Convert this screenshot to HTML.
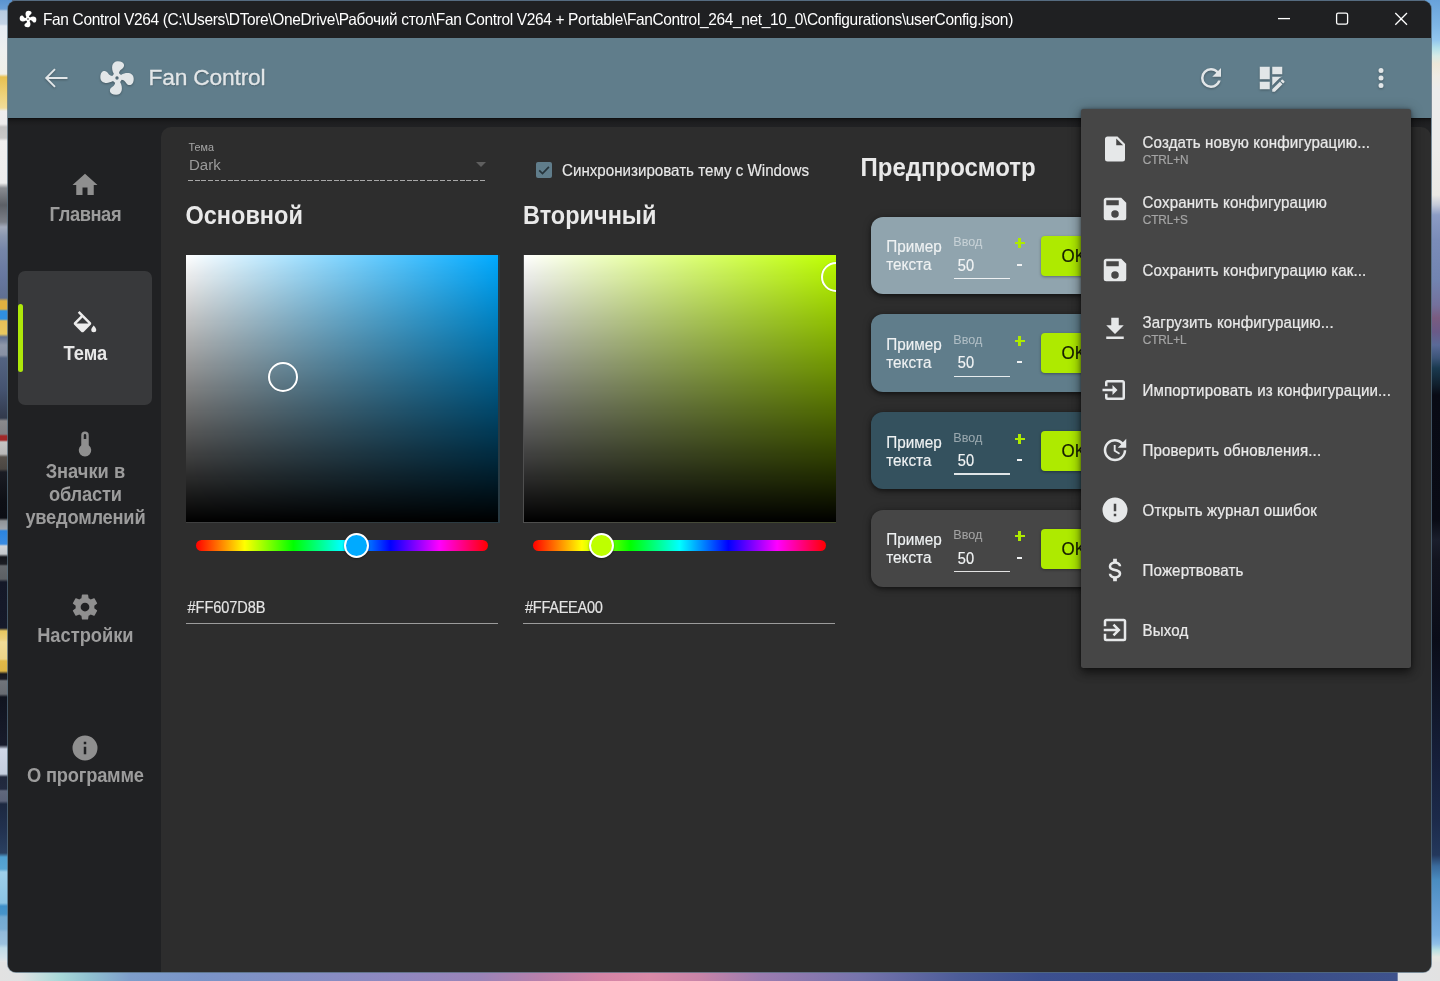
<!DOCTYPE html>
<html lang="ru">
<head>
<meta charset="utf-8">
<title>Fan Control V264</title>
<style>
*{box-sizing:border-box;margin:0;padding:0}
html,body{width:1440px;height:981px;overflow:hidden;background:#5a6a8a;font-family:"Liberation Sans",sans-serif;}
.abs{position:absolute}
#desk{position:absolute;left:0;top:0;width:1440px;height:981px;overflow:hidden;}
#deskL{position:absolute;left:0;top:0;width:12px;height:981px;
 background:linear-gradient(180deg,#5a94d0 0px,#6a9fd6 9px,#b8cce0 11px,#c4d4e6 24px,#e6ecf3 26px,#eef0f0 50px,#f0efe8 74px,#e8c050 77px,#efd27a 95px,#f2dc98 108px,#eeeeee 111px,#ececec 124px,#c2c2c2 127px,#c8c8c8 138px,#f0f0f0 141px,#ededed 183px,#8a8d92 188px,#5c6066 205px,#7c8088 222px,#a2aaba 227px,#8b98b0 236px,#7686a8 250px,#6878a0 275px,#5f6f92 298px,#e0b040 301px,#e0b040 309px,#3090e0 311px,#3090e0 319px,#e8c058 321px,#e8c860 334px,#607090 337px,#8e97a9 345px,#8891a4 355px,#546482 358px,#455370 390px,#323a4c 418px,#8a8a8c 421px,#808084 434px,#a02828 436px,#a02828 440px,#c4c4c4 442px,#b8b8b8 454px,#56504a 457px,#4a4642 469px,#1a1c24 472px,#0e1016 500px,#0c0e14 518px,#909498 521px,#9ea4ac 529px,#2a84e0 531px,#3a8ce2 544px,#d0d4d8 546px,#c4c8cc 554px,#14161c 557px,#1c1e24 564px,#64686c 566px,#5c6064 579px,#141828 582px,#161a2a 628px,#e8c860 631px,#ecd07a 639px,#f0dc98 642px,#ecd488 659px,#e0b848 661px,#dcb444 671px,#15171f 674px,#1c1e26 679px,#70747a 681px,#686c72 694px,#10141f 697px,#181c2c 745px,#d0d8e8 749px,#c4cede 774px,#20283c 777px,#222a40 789px,#60687c 791px,#5a6278 801px,#1c2840 804px,#223250 830px,#2a4060 853px,#50a0d0 857px,#58a6d4 869px,#9fd0ea 872px,#8cc4e4 903px,#4090c8 906px,#4694ca 914px,#72aad2 917px,#7aaed4 929px,#92badA 932px,#9cc2de 944px,#c0dce8 948px,#d4e2ea 958px,#e4e4e4 962px,#e4e4e4 981px);}
#deskB{position:absolute;left:0;top:962px;width:1440px;height:19px;
 background:linear-gradient(90deg,#e2e2e2 0px,#e0e2e3 20px,#c4dede 40px,#a8d8d8 60px,#90c0d0 90px,#7e9ecb 130px,#7a94c8 200px,#8090c4 270px,#9088c0 400px,#9a84b8 480px,#b880ac 540px,#d484a6 600px,#da8aa8 650px,#c884a8 700px,#9c7cb0 760px,#7674ac 860px,#4c5c98 960px,#3c5090 1040px,#384c88 1200px,#3e528c 1397px,#e2e4e6 1398.5px,#e2e2e2 1440px);}
#deskR{position:absolute;left:1425px;top:0;width:15px;height:981px;
 background:linear-gradient(180deg,#68a2da 0px,#7eb6e6 25px,#92c6ee 40px,#b2e0ea 48px,#d8ece6 56px,#eee8d8 64px,#efece4 76px,#ececec 90px,#ececea 150px,#eae9e4 195px,#c4cad8 205px,#8c9cc4 215px,#7a8cb8 240px,#7284b0 280px,#74719c 305px,#7a5c80 318px,#6a5a88 332px,#5a6a98 345px,#3c5478 358px,#1a3a50 368px,#10202e 384px,#080a14 395px,#090b15 520px,#1a1e2c 540px,#12141f 560px,#0a0c18 640px,#101628 700px,#161f3a 760px,#1c2a4a 820px,#24385c 855px,#3a6a9c 866px,#4a8cc0 880px,#68a0d6 915px,#78aee0 935px,#90c0e8 944px,#b8e0e2 950px,#e6e8e2 957px,#e2e2e2 964px,#e0e0e0 981px);}
#win{position:absolute;left:8px;top:1px;width:1423px;height:971px;border-radius:8px;overflow:hidden;background:#2d2d2d;box-shadow:0 0 0 1px rgba(84,108,124,.75);}
#w{position:absolute;left:-8px;top:-1px;width:1440px;height:981px;will-change:transform;}
#title{position:absolute;left:8px;top:0;width:1424px;height:38px;background:#1f2022;color:#fff;}
#title .t{transform:scaleY(1.05);transform-origin:0 15.37px;position:absolute;left:35px;top:9.7px;font-size:15.5px;line-height:20px;white-space:nowrap;letter-spacing:-0.36px}
svg{position:absolute;overflow:visible}
.ic{fill:#e2e6e8}
#appname{-webkit-text-stroke:.3px #e2e6e8;text-shadow:.5px 1px 1.5px rgba(0,0,0,.28);position:absolute;left:140.5px;top:25.4px;font-size:22.8px;line-height:28px;color:#e2e6e8;white-space:nowrap;letter-spacing:-0.2px}
#appbar svg{filter:drop-shadow(.4px 1px .9px rgba(0,0,0,.28))}
#appbar{position:absolute;left:8px;top:38px;width:1424px;height:80px;background:#607d8b;}
#side{position:absolute;left:8px;top:118px;width:154px;height:854px;background:#202123;}
#gap{position:absolute;left:160px;top:118px;width:1272px;height:24px;background:#202123;}
#content{position:absolute;left:160.8px;top:126.5px;width:1270px;height:846px;background:#2d2d2d;border-radius:10px 10px 0 0;}
#abshadow{position:absolute;left:8px;top:118px;width:1424px;height:8px;background:linear-gradient(180deg,rgba(0,0,0,.62) 0,rgba(0,0,0,.3) 1.5px,rgba(0,0,0,.12) 4px,rgba(0,0,0,0) 8px);}
.nav{transform:scaleY(1.06);transform-origin:0 17.69px;position:absolute;left:9.4px;width:152px;text-align:center;font-weight:bold;font-size:18.3px;line-height:22.7px;color:#9c9c9c;white-space:nowrap}
.nav.sel{color:#e8e8e8}
.ni{fill:#8f8f8f}
#selbox{position:absolute;left:18px;top:271px;width:134px;height:134px;border-radius:7px;background:#38393b}
#selbar{position:absolute;left:17.8px;top:304.3px;width:5.5px;height:68px;border-radius:2.7px;background:#aee80a}
.tx{position:absolute;white-space:nowrap}
.h{transform:scaleY(1.09);transform-origin:0 22.14px;position:absolute;white-space:nowrap;font-weight:bold;font-size:23.5px;line-height:28px;color:#e9e9e9}
.sv{position:absolute;top:255px;width:313px;height:267px;overflow:hidden}
.sv i{position:absolute;width:30px;height:30px;border:2.2px solid #fff;border-radius:50%;box-shadow:0 0 1px rgba(0,0,0,.35)}
.hue{position:absolute;top:539.5px;height:11px;border-radius:5.5px;background:linear-gradient(90deg,#f00 0%,#ff0 16.67%,#0f0 33.33%,#0ff 50%,#00f 66.67%,#f0f 83.33%,#f00 100%)}
.th{position:absolute;top:533px;width:25px;height:25px;border-radius:50%;border:2.6px solid #fff;box-shadow:0 1px 2px rgba(0,0,0,.4)}
.hex{-webkit-text-stroke:.15px #e4e4e4;transform:scaleY(1.07);transform-origin:0 14.06px;position:absolute;top:599.2px;font-size:14.6px;line-height:18px;color:#e4e4e4;white-space:nowrap}
.ul{position:absolute;top:622.6px;height:1.3px;width:312.2px;background:#9b9b9b}
.card{position:absolute;left:871px;width:300px;height:77.3px;border-radius:12px 0 0 12px;box-shadow:0 2px 4px rgba(0,0,0,.45),0 1px 8px rgba(0,0,0,.25)}
.card .p{transform:scaleY(1.02);transform-origin:0 50%;-webkit-text-stroke:.15px #eef1f2;position:absolute;left:15.2px;top:21.5px;font-size:15.3px;line-height:17.9px;color:#eef1f2}
.card .l{transform:scaleY(1.025);transform-origin:0 11.87px;position:absolute;left:82.3px;top:18.7px;font-size:12.6px;line-height:15px;color:rgba(255,255,255,.5)}
.card .v{transform:scaleY(1.07);transform-origin:0 14.06px;-webkit-text-stroke:.15px #f2f4f5;position:absolute;left:86.8px;top:40.2px;font-size:14.6px;line-height:18px;color:#f2f4f5}
.card .u{position:absolute;left:83px;top:61.4px;width:56.3px;height:1.3px;background:rgba(255,255,255,.85)}
.card .pl{position:absolute;left:143.6px;top:21.7px;width:10px;height:10px;}
.card .pl:before{content:"";position:absolute;left:0;top:3.9px;width:10px;height:2.2px;background:#aeea00}
.card .pl:after{content:"";position:absolute;left:3.9px;top:0;width:2.2px;height:10px;background:#aeea00}
.card .mi{position:absolute;left:146px;top:47px;width:5.2px;height:2px;background:#f0f2f3}
.card .ok{position:absolute;left:170px;top:19px;width:140px;height:40px;border-radius:4px;background:#aeea00;color:#161d00;font-size:17px;line-height:40px;padding-left:20.5px;-webkit-text-stroke:.2px #161d00;box-shadow:0 1px 3px rgba(0,0,0,.35)}
#menu{position:absolute;left:1080.5px;top:108.5px;width:330px;height:559.6px;background:#464646;border-radius:2.5px;box-shadow:0 5px 9px rgba(0,0,0,.42),0 2px 14px rgba(0,0,0,.3),0 0 3px rgba(0,0,0,.35)}
.mt{transform:scaleY(1.04);transform-origin:0 14.23px;-webkit-text-stroke:.22px #e9e9e9;position:absolute;left:1142.6px;font-size:15.1px;line-height:18px;color:#e9e9e9;white-space:nowrap;letter-spacing:.12px}
.ms{transform:scaleY(1.10);transform-origin:0 11.09px;-webkit-text-stroke:.2px #a4a4a4;position:absolute;left:1142.8px;font-size:11.8px;line-height:14px;color:#a4a4a4;white-space:nowrap;letter-spacing:-0.1px}
.mi2{fill:#e6e8e9}
</style>
</head>
<body>
<div id="desk"><div id="deskL"></div><div id="deskR"></div><div id="deskB"></div></div>
<div id="win"><div id="w">
  <div id="title">
    <svg style="left:10.2px;top:8.8px" width="20" height="20" viewBox="0 0 24 24"><path fill="#fff" d="M12,11A1,1 0 0,0 11,12A1,1 0 0,0 12,13A1,1 0 0,0 13,12A1,1 0 0,0 12,11M12.5,2C17,2 17.11,5.57 14.75,6.75C13.76,7.24 13.32,8.29 13.13,9.22C13.61,9.42 14.03,9.73 14.35,10.13C18.05,8.13 22.03,8.92 22.03,12.5C22.03,17 18.46,17.1 17.28,14.73C16.78,13.74 15.72,13.3 14.79,13.11C14.59,13.59 14.28,14 13.88,14.34C15.87,18.03 15.08,22 11.5,22C7,22 6.91,18.42 9.27,17.24C10.25,16.75 10.69,15.71 10.89,14.79C10.4,14.59 9.97,14.27 9.65,13.87C5.96,15.85 2,15.07 2,11.5C2,7 5.56,6.89 6.74,9.26C7.24,10.25 8.29,10.68 9.22,10.87C9.41,10.39 9.73,9.97 10.14,9.65C8.15,5.96 8.94,2 12.5,2Z"/></svg>
    <svg style="left:1262px;top:6px" width="160" height="26" viewBox="0 0 160 26" fill="none" stroke="#fff" stroke-width="1.3">
      <path d="M8 12.6H20"/>
      <rect x="66.6" y="7.1" width="11" height="11" rx="1.6"/>
      <path d="M125.3 7L137 18.7M137 7L125.3 18.7"/>
    </svg>
    <span class="t">Fan Control V264 (C:\Users\DTore\OneDrive\Рабочий стол\Fan Control V264 + Portable\FanControl_264_net_10_0\Configurations\userConfig.json)</span>
  </div>
  <div id="appbar">
    <svg style="left:36px;top:30px" width="24" height="20" viewBox="0 0 24 20" fill="none" stroke="#e2e6e8" stroke-width="1.9" stroke-linecap="butt" stroke-linejoin="miter"><path d="M23.5 10H2.2M11 1.2L2.2 10L11 18.8"/></svg>
    <svg style="left:89px;top:19.6px" width="40" height="40" viewBox="0 0 24 24"><path class="ic" d="M12,11A1,1 0 0,0 11,12A1,1 0 0,0 12,13A1,1 0 0,0 13,12A1,1 0 0,0 12,11M12.5,2C17,2 17.11,5.57 14.75,6.75C13.76,7.24 13.32,8.29 13.13,9.22C13.61,9.42 14.03,9.73 14.35,10.13C18.05,8.13 22.03,8.92 22.03,12.5C22.03,17 18.46,17.1 17.28,14.73C16.78,13.74 15.72,13.3 14.79,13.11C14.59,13.59 14.28,14 13.88,14.34C15.87,18.03 15.08,22 11.5,22C7,22 6.91,18.42 9.27,17.24C10.25,16.75 10.69,15.71 10.89,14.79C10.4,14.59 9.97,14.27 9.65,13.87C5.96,15.85 2,15.07 2,11.5C2,7 5.56,6.89 6.74,9.26C7.24,10.25 8.29,10.68 9.22,10.87C9.41,10.39 9.73,9.97 10.14,9.65C8.15,5.96 8.94,2 12.5,2Z"/></svg>
    <span id="appname">Fan Control</span>
    <svg style="left:1188px;top:25px" width="30" height="30" viewBox="0 0 24 24"><path class="ic" d="M17.65,6.35C16.2,4.9 14.21,4 12,4A8,8 0 0,0 4,12A8,8 0 0,0 12,20C15.73,20 18.84,17.45 19.73,14H17.65C16.83,16.33 14.61,18 12,18A6,6 0 0,1 6,12A6,6 0 0,1 12,6C13.66,6 15.14,6.69 16.22,7.78L13,11H20V4L17.65,6.35Z"/></svg>
    <svg style="left:1248px;top:25px" width="30" height="30" viewBox="0 0 24 24"><path class="ic" d="M21 13.1C20.9 13.1 20.7 13.2 20.6 13.3L19.6 14.3L21.7 16.4L22.7 15.4C22.9 15.2 22.9 14.8 22.7 14.6L21.4 13.3C21.3 13.2 21.2 13.1 21 13.1M19.1 14.9L13 20.9V23H15.1L21.2 16.9L19.1 14.9M21 9H13V3H21V9M13 18.06V11H21V11.1C20.24 11.1 19.57 11.5 19.19 11.89L13 18.06M11 13H3V3H11V13M11 21H3V15H11V21Z"/></svg>
    <svg style="left:1358px;top:25px" width="30" height="30" viewBox="0 0 24 24"><path class="ic" d="M12,16A2,2 0 0,1 14,18A2,2 0 0,1 12,20A2,2 0 0,1 10,18A2,2 0 0,1 12,16M12,10A2,2 0 0,1 14,12A2,2 0 0,1 12,14A2,2 0 0,1 10,12A2,2 0 0,1 12,10M12,4A2,2 0 0,1 14,6A2,2 0 0,1 12,8A2,2 0 0,1 10,6A2,2 0 0,1 12,4Z"/></svg>
  </div>
  <div id="side"></div>
  <div id="selbox"></div><div id="selbar"></div>
  <svg style="left:70px;top:170px" width="30" height="30" viewBox="0 0 24 24"><path class="ni" d="M10,20V14H14V20H19V12H22L12,3L2,12H5V20H10Z"/></svg>
  <div class="nav" style="top:203.6px;letter-spacing:-0.4px">Главная</div>
  <svg style="left:70px;top:311px" width="30" height="30" viewBox="0 0 24 24"><path fill="#ececec" d="M19,11.5C19,11.5 17,13.67 17,15A2,2 0 0,0 19,17A2,2 0 0,0 21,15C21,13.67 19,11.5 19,11.5M5.21,10L10,5.21L14.79,10M16.56,8.94L7.62,0L6.21,1.41L8.59,3.79L3.44,8.94C2.85,9.5 2.85,10.47 3.44,11.06L8.94,16.56C9.23,16.85 9.62,17 10,17C10.38,17 10.77,16.85 11.06,16.56L16.56,11.06C17.15,10.47 17.15,9.5 16.56,8.94Z"/></svg>
  <div class="nav sel" style="top:343.3px">Тема</div>
  <svg style="left:70px;top:429px" width="30" height="30" viewBox="0 0 24 24"><path class="ni" d="M15 13V5A3 3 0 0 0 9 5V13A5 5 0 1 0 15 13M12 4A1 1 0 0 1 13 5V8H11V5A1 1 0 0 1 12 4Z"/></svg>
  <div class="nav" style="top:461.4px;line-height:21.5px">Значки в<br><span style="letter-spacing:-0.2px">области</span><br><span style="letter-spacing:-0.22px">уведомлений</span></div>
  <svg style="left:70px;top:592px" width="30" height="30" viewBox="0 0 24 24"><path class="ni" d="M12,15.5A3.5,3.5 0 0,1 8.5,12A3.5,3.5 0 0,1 12,8.5A3.5,3.5 0 0,1 15.5,12A3.5,3.5 0 0,1 12,15.5M19.43,12.97C19.47,12.65 19.5,12.33 19.5,12C19.5,11.67 19.47,11.34 19.43,11L21.54,9.37C21.73,9.22 21.78,8.95 21.66,8.73L19.66,5.27C19.54,5.05 19.27,4.96 19.05,5.05L16.56,6.05C16.04,5.66 15.5,5.32 14.87,5.07L14.5,2.42C14.46,2.18 14.25,2 14,2H10C9.75,2 9.54,2.18 9.5,2.42L9.13,5.07C8.5,5.32 7.96,5.66 7.44,6.05L4.95,5.05C4.73,4.96 4.46,5.05 4.34,5.27L2.34,8.73C2.21,8.95 2.27,9.22 2.46,9.37L4.57,11C4.53,11.34 4.5,11.67 4.5,12C4.5,12.33 4.53,12.65 4.57,12.97L2.46,14.63C2.27,14.78 2.21,15.05 2.34,15.27L4.34,18.73C4.46,18.95 4.73,19.03 4.95,18.95L7.44,17.94C7.96,18.34 8.5,18.68 9.13,18.93L9.5,21.58C9.54,21.82 9.75,22 10,22H14C14.25,22 14.46,21.82 14.5,21.58L14.87,18.93C15.5,18.67 16.04,18.34 16.56,17.94L19.05,18.95C19.27,19.03 19.54,18.95 19.66,18.73L21.66,15.27C21.78,15.05 21.73,14.78 21.54,14.63L19.43,12.97Z"/></svg>
  <div class="nav" style="top:624.6px">Настройки</div>
  <svg style="left:70px;top:733px" width="30" height="30" viewBox="0 0 24 24"><path class="ni" d="M13,9H11V7H13M13,17H11V11H13M12,2A10,10 0 0,0 2,12A10,10 0 0,0 12,22A10,10 0 0,0 22,12A10,10 0 0,0 12,2Z"/></svg>
  <div class="nav" style="top:765.2px;letter-spacing:-0.19px">О программе</div>
  <div id="gap"></div>
  <div id="content"></div>
  <div class="tx" style="left:188.5px;top:141px;font-size:10.8px;line-height:13px;color:#a6a6a6">Тема</div>
  <div class="tx" style="transform:scaleY(1.03);transform-origin:0 14.20px;left:189px;top:155.5px;font-size:15px;line-height:18px;color:#9b9b9b">Dark</div>
  <svg style="left:476px;top:162px" width="10" height="5" viewBox="0 0 10 5"><path fill="#5f5f5f" d="M0 0H10L5 5Z"/></svg>
  <div class="abs" style="left:188.2px;top:179.8px;width:297.8px;height:1.5px;background:repeating-linear-gradient(90deg,#a8a8a8 0,#a8a8a8 4.9px,transparent 4.9px,transparent 6.63px)"></div>
  <div class="abs" style="left:536px;top:162px;width:16px;height:16px;border-radius:2px;background:#607d8b"></div>
  <svg style="left:536px;top:162px" width="16" height="16" viewBox="0 0 16 16" fill="none" stroke="#26343b" stroke-width="1.7"><path d="M3.2 8.3L6.5 11.5L12.9 4.8"/></svg>
  <div class="tx" style="transform:scaleY(1.03);-webkit-text-stroke:.15px #e8e8e8;transform-origin:0 14.25px;left:562px;top:161.9px;font-size:15.15px;line-height:18px;color:#e8e8e8">Синхронизировать тему с Windows</div>
  <div class="h" style="left:185.5px;top:201.9px">Основной</div>
  <div class="h" style="left:523px;top:201.9px">Вторичный</div>
  <div class="h" style="left:860.5px;top:153.6px;font-size:24px">Предпросмотр</div>
  <div class="abs" style="left:186px;top:255px;width:313.8px;height:268px;background:linear-gradient(90deg,rgba(255,255,255,.09),rgba(0,170,255,.1))"></div>
  <div class="abs" style="left:523px;top:255px;width:313.4px;height:268px;background:linear-gradient(90deg,rgba(255,255,255,.16),rgba(190,255,0,.12))"></div>
  <div class="sv" style="left:186px;width:312.2px;height:266.8px;background:linear-gradient(0deg,#000,rgba(0,0,0,0)),linear-gradient(90deg,#fff,#00aaff)"><i style="left:82px;top:107.2px"></i></div>
  <div class="sv" style="left:524.2px;width:312.2px;height:266.8px;background:linear-gradient(0deg,#000,rgba(0,0,0,0)),linear-gradient(90deg,#fff,#beff00)"><i style="left:296.6px;top:7.2px"></i></div>
  <div class="hue" style="left:195.8px;width:292.5px"></div>
  <div class="th" style="left:344px;background:#00aaff"></div>
  <div class="hue" style="left:532.5px;width:293.8px"></div>
  <div class="th" style="left:589px;background:#beff00"></div>
  <div class="hex" style="left:187.6px;letter-spacing:-0.1px">#FF607D8B</div><div class="ul" style="left:186px"></div>
  <div class="hex" style="left:525px;letter-spacing:-0.3px">#FFAEEA00</div><div class="ul" style="left:523.3px"></div>

  <div class="card" style="top:216.5px;background:#90a4ae"><div class="p">Пример<br>текста</div><div class="l">Ввод</div><div class="v">50</div><div class="u"></div><div class="pl"></div><div class="mi"></div><div class="ok"><span style="display:inline-block;transform:scaleY(1.06) translateY(0.6px)">OK</span></div></div>
  <div class="card" style="top:314.3px;background:#607d8b"><div class="p">Пример<br>текста</div><div class="l">Ввод</div><div class="v">50</div><div class="u"></div><div class="pl"></div><div class="mi"></div><div class="ok"><span style="display:inline-block;transform:scaleY(1.06) translateY(0.6px)">OK</span></div></div>
  <div class="card" style="top:412px;background:#34515e"><div class="p">Пример<br>текста</div><div class="l">Ввод</div><div class="v">50</div><div class="u"></div><div class="pl"></div><div class="mi"></div><div class="ok"><span style="display:inline-block;transform:scaleY(1.06) translateY(0.6px)">OK</span></div></div>
  <div class="card" style="top:509.7px;background:#464646"><div class="p">Пример<br>текста</div><div class="l">Ввод</div><div class="v">50</div><div class="u"></div><div class="pl"></div><div class="mi"></div><div class="ok"><span style="display:inline-block;transform:scaleY(1.06) translateY(0.6px)">OK</span></div></div>
  <div id="abshadow"></div>
  <div id="menu"></div>
  <svg style="left:1100px;top:133.5px" width="30" height="30" viewBox="0 0 24 24"><path class="mi2" d="M13,9V3.5L18.5,9M6,2C4.89,2 4,2.89 4,4V20A2,2 0 0,0 6,22H18A2,2 0 0,0 20,20V8L14,2H6Z"/></svg>
  <div class="mt" style="top:134.2px">Создать новую конфигурацию...</div>
  <div class="ms" style="top:152.7px">CTRL+N</div>
  <svg style="left:1100px;top:193.5px" width="30" height="30" viewBox="0 0 24 24"><path class="mi2" d="M15,9H5V5H15M12,19A3,3 0 0,1 9,16A3,3 0 0,1 12,13A3,3 0 0,1 15,16A3,3 0 0,1 12,19M17,3H5C3.89,3 3,3.9 3,5V19A2,2 0 0,0 5,21H19A2,2 0 0,0 21,19V7L17,3Z"/></svg>
  <div class="mt" style="top:194.1px">Сохранить конфигурацию</div>
  <div class="ms" style="top:212.9px">CTRL+S</div>
  <svg style="left:1100px;top:255.3px" width="30" height="30" viewBox="0 0 24 24"><path class="mi2" d="M15,9H5V5H15M12,19A3,3 0 0,1 9,16A3,3 0 0,1 12,13A3,3 0 0,1 15,16A3,3 0 0,1 12,19M17,3H5C3.89,3 3,3.9 3,5V19A2,2 0 0,0 5,21H19A2,2 0 0,0 21,19V7L17,3Z"/></svg>
  <div class="mt" style="top:261.5px">Сохранить конфигурацию как...</div>
  <svg style="left:1100px;top:313.5px" width="30" height="30" viewBox="0 0 24 24"><path class="mi2" d="M5,20H19V18H5M19,9H15V3H9V9H5L12,16L19,9Z"/></svg>
  <div class="mt" style="top:314.2px">Загрузить конфигурацию...</div>
  <div class="ms" style="top:332.9px">CTRL+L</div>
  <svg style="left:1100px;top:375.2px" width="30" height="30" viewBox="0 0 24 24"><path class="mi2" d="M14,12L10,8V11H2V13H10V16M20,18V6C20,4.89 19.1,4 18,4H6A2,2 0 0,0 4,6V9H6V6H18V18H6V15H4V18A2,2 0 0,0 6,20H18A2,2 0 0,0 20,18Z"/></svg>
  <div class="mt" style="top:381.5px">Импортировать из конфигурации...</div>
  <svg style="left:1100px;top:435.3px" width="30" height="30" viewBox="0 0 24 24"><path class="mi2" d="M21,10.12H14.22L16.96,7.3C14.23,4.6 9.81,4.5 7.08,7.2C4.35,9.91 4.35,14.28 7.08,17C9.81,19.7 14.23,19.7 16.96,17C18.32,15.65 19,14.08 19,12.1H21C21,14.08 20.12,16.65 18.36,18.39C14.85,21.87 9.15,21.87 5.64,18.39C2.14,14.92 2.11,9.28 5.62,5.81C9.13,2.34 14.76,2.34 18.27,5.81L21,3V10.12M12.5,8V12.25L16,14.33L15.28,15.54L11,13V8H12.5Z"/></svg>
  <div class="mt" style="top:441.5px">Проверить обновления...</div>
  <svg style="left:1100px;top:495.3px" width="30" height="30" viewBox="0 0 24 24"><path class="mi2" d="M13,13H11V7H13M13,17H11V15H13M12,2A10,10 0 0,0 2,12A10,10 0 0,0 12,22A10,10 0 0,0 22,12A10,10 0 0,0 12,2Z"/></svg>
  <div class="mt" style="top:501.5px">Открыть журнал ошибок</div>
  <svg style="left:1100px;top:555px" width="30" height="30" viewBox="0 0 24 24"><path class="mi2" d="M7,15H9C9,16.08 10.37,17 12,17C13.63,17 15,16.08 15,15C15,13.9 13.96,13.5 11.76,12.97C9.64,12.44 7,11.78 7,9C7,7.21 8.47,5.69 10.5,5.18V3H13.5V5.18C15.53,5.69 17,7.21 17,9H15C15,7.92 13.63,7 12,7C10.37,7 9,7.92 9,9C9,10.1 10.04,10.5 12.24,11.03C14.36,11.56 17,12.22 17,15C17,16.79 15.53,18.31 13.5,18.82V21H10.5V18.82C8.47,18.31 7,16.79 7,15Z"/></svg>
  <div class="mt" style="top:561.5px">Пожертвовать</div>
  <svg style="left:1100px;top:615.2px" width="30" height="30" viewBox="0 0 24 24"><path class="mi2" d="M19,3H5C3.89,3 3,3.89 3,5V9H5V5H19V19H5V15H3V19A2,2 0 0,0 5,21H19A2,2 0 0,0 21,19V5C21,3.89 20.1,3 19,3M10.08,15.58L11.5,17L16.5,12L11.5,7L10.08,8.41L12.67,11H3V13H12.67L10.08,15.58Z"/></svg>
  <div class="mt" style="top:621.5px">Выход</div>
</div></div>
</body>
</html>
